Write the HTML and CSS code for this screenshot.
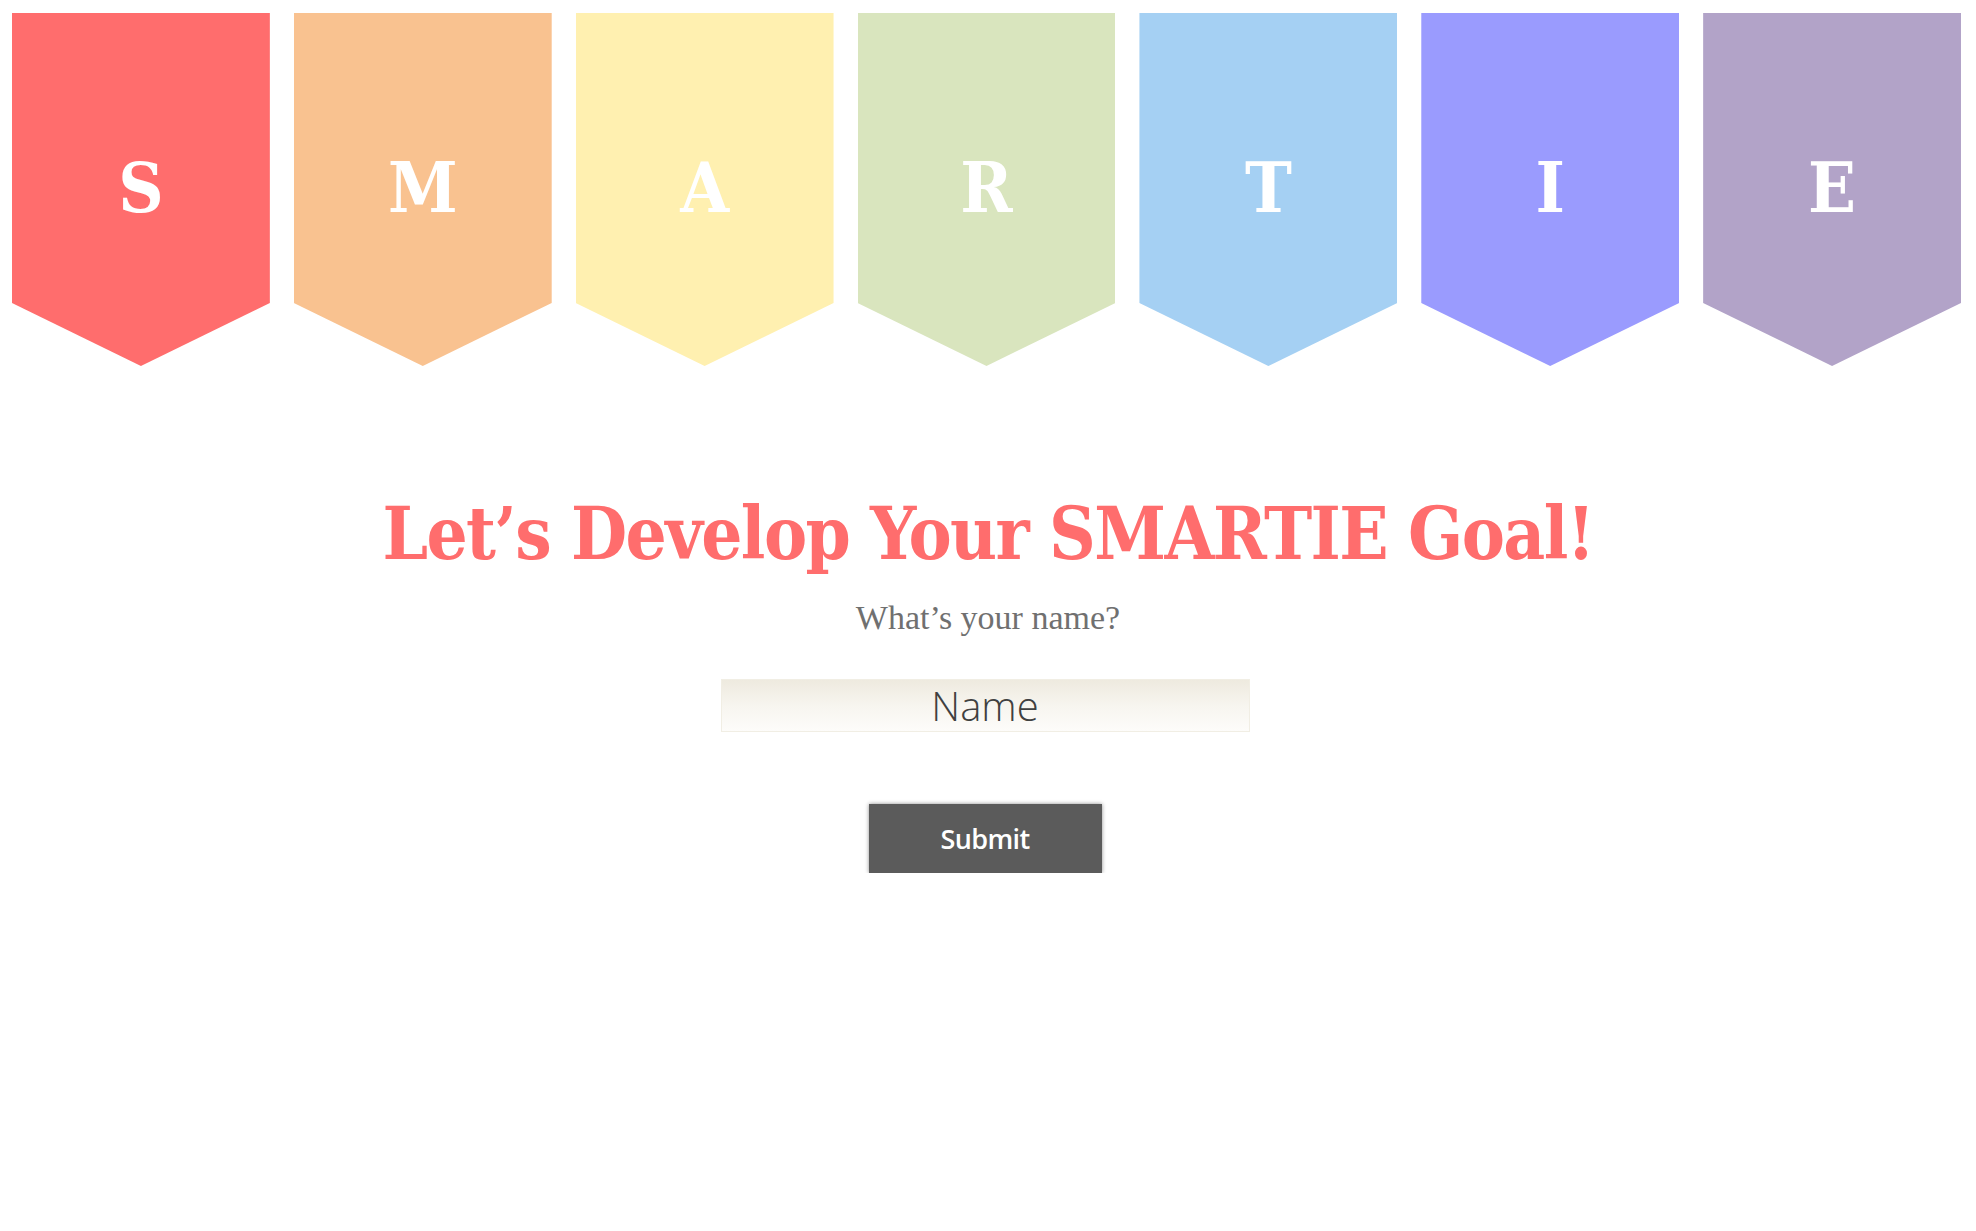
FILE: index.html
```html
<!DOCTYPE html>
<html lang="en">
<head>
<meta charset="utf-8">
<title>SMARTIE Goal</title>
<link rel="stylesheet" href="styles.css">
</head>
<body>
<div class="banners">
  <div class="banner b-s"><span>S</span></div>
  <div class="banner b-m"><span>M</span></div>
  <div class="banner b-a"><span>A</span></div>
  <div class="banner b-r"><span>R</span></div>
  <div class="banner b-t"><span>T</span></div>
  <div class="banner b-i"><span>I</span></div>
  <div class="banner b-e"><span>E</span></div>
</div>
<main class="content">
  <h1 class="title">Let’s Develop Your SMARTIE Goal!</h1>
  <p class="question">What’s your name?</p>
  <form class="name-form">
    <input class="name-input" type="text" placeholder="Name">
    <button class="submit" type="button">Submit</button>
  </form>
</main>
</body>
</html>
```
FILE: styles.css
```css
html, body {
  margin: 0;
  padding: 0;
  background: #ffffff;
}

body {
  font-family: "DejaVu Serif", serif;
}

.banners {
  display: grid;
  grid-template-columns: repeat(7, 1fr);
  column-gap: 24px;
  padding: 13px 15px 0 12px;
}

.banner {
  height: 353px;
  clip-path: polygon(0 0, 100% 0, 100% 82.15%, 50% 100%, 0 82.15%);
  display: flex;
  justify-content: center;
  padding-top: 140px;
  box-sizing: border-box;
}

.banner span {
  font-family: "DejaVu Serif Condensed", "DejaVu Serif", serif;
  font-weight: bold;
  font-size: 70px;
  line-height: 70px;
  color: #ffffff;
}

.b-s { background: #ff6d6d; }
.b-m { background: #f9c290; }
.b-a { background: #fff0b0; }
.b-r { background: #d9e5be; }
.b-t { background: #a5d0f3; }
.b-i { background: #9a9bfe; }
.b-e { background: #b2a3c8; }

.content {
  display: flex;
  flex-direction: column;
  align-items: center;
}

.title {
  margin: 128px 0 0;
  font-family: "DejaVu Serif Condensed", "DejaVu Serif", serif;
  font-weight: bold;
  font-size: 72px;
  line-height: 80px;
  color: #ff6d6d;
  letter-spacing: -1.6px;
}

.question {
  margin: 24px 0 0;
  font-family: "Liberation Serif", serif;
  font-size: 34px;
  line-height: 40px;
  color: #707070;
}

.name-form {
  display: flex;
  flex-direction: column;
  align-items: center;
  margin-top: 41px;
  padding-right: 6px;
}

.name-input {
  width: 529px;
  height: 53px;
  box-sizing: border-box;
  border: 1px solid #f1eee4;
  background: linear-gradient(to bottom, #eeeadf 0%, #f7f5ef 50%, #fdfcfa 100%);
  font-family: "Open Sans", sans-serif;
  font-weight: 300;
  font-size: 40px;
  text-align: center;
  color: #444;
  padding: 0;
  outline: none;
}

.name-input::placeholder {
  color: #404040;
  opacity: 1;
}

.submit {
  margin-top: 72px;
  width: 233px;
  height: 69px;
  border: none;
  background: #5b5b5b;
  color: #ffffff;
  font-family: "Open Sans", sans-serif;
  font-weight: 600;
  font-size: 27px;
  letter-spacing: -0.6px;
  box-shadow: 0 0 4px rgba(0, 0, 0, 0.45);
  cursor: pointer;
}
```
